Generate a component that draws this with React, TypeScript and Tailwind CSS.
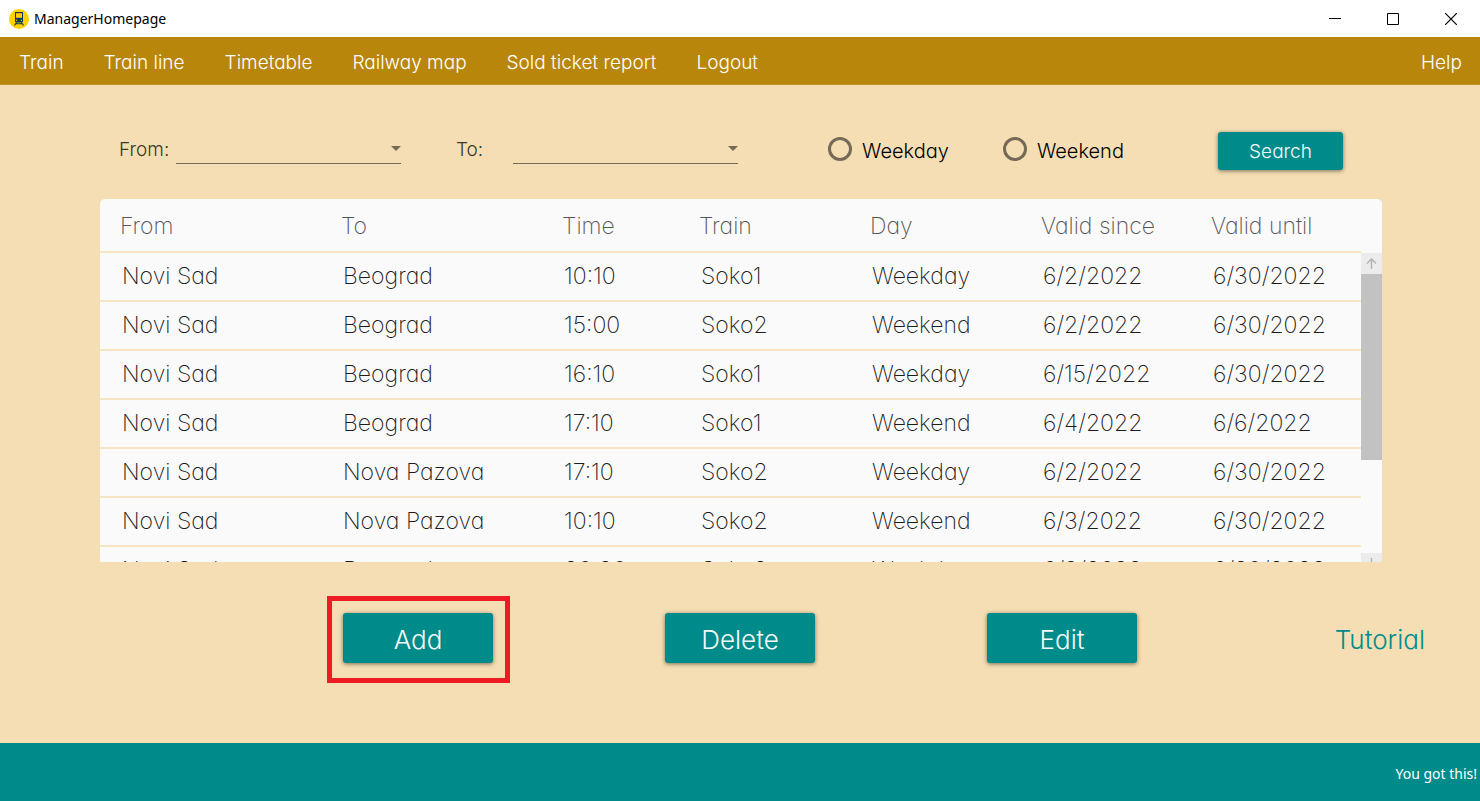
import React from "react";

const menuItems = ["Train", "Train line", "Timetable", "Railway map", "Sold ticket report", "Logout"];

const columns = [
  { label: "From", width: "w-[221px]" },
  { label: "To", width: "w-[221px]" },
  { label: "Time", width: "w-[137px]" },
  { label: "Train", width: "w-[171px]" },
  { label: "Day", width: "w-[171px]" },
  { label: "Valid since", width: "w-[170px]" },
  { label: "Valid until", width: "w-[170px]" },
];

const rows = [
  ["Novi Sad", "Beograd", "10:10", "Soko1", "Weekday", "6/2/2022", "6/30/2022"],
  ["Novi Sad", "Beograd", "15:00", "Soko2", "Weekend", "6/2/2022", "6/30/2022"],
  ["Novi Sad", "Beograd", "16:10", "Soko1", "Weekday", "6/15/2022", "6/30/2022"],
  ["Novi Sad", "Beograd", "17:10", "Soko1", "Weekend", "6/4/2022", "6/6/2022"],
  ["Novi Sad", "Nova Pazova", "17:10", "Soko2", "Weekday", "6/2/2022", "6/30/2022"],
  ["Novi Sad", "Nova Pazova", "10:10", "Soko2", "Weekend", "6/3/2022", "6/30/2022"],
  ["Novi Sad", "Beograd", "20:20", "Soko2", "Weekday", "6/2/2022", "6/30/2022"],
];

function TrainLogo() {
  return (
    <svg width="20" height="20" viewBox="0 0 20 20" aria-hidden="true">
      <circle cx="10" cy="10" r="10" fill="#ffd200" />
      <path d="M6 3h8v9.500l-1 1H7l-1-1z" fill="#0f3558" />
      <path d="M7 4.200h6v4.600H7z" fill="#ffd200" />
      <circle cx="7.700" cy="11.300" r=".7" fill="#ffd200" />
      <circle cx="12.300" cy="11.300" r=".7" fill="#ffd200" />
      <path d="M7.500 13.500 5.500 16.500M12.500 13.500l2 3M6.800 14.700h6.400" stroke="#0f3558" strokeWidth="1.100" />
    </svg>
  );
}

function TitleBar() {
  return (
    <header className="flex h-[37px] items-center justify-between bg-white pl-[9px]">
      <div className="flex items-center gap-[5px] font-['Noto_Sans','Open_Sans',sans-serif] text-sm font-normal text-black">
        <TrainLogo />
        <span>ManagerHomepage</span>
      </div>
      <div className="flex h-full text-black">
        <button aria-label="Minimize" className="flex w-[58px] items-center justify-center">
          <svg width="12" height="12" viewBox="0 0 12 12" shapeRendering="crispEdges">
            <path d="M0 5.5h12" stroke="currentColor" />
          </svg>
        </button>
        <button aria-label="Maximize" className="flex w-[58px] items-center justify-center">
          <svg width="12" height="12" viewBox="0 0 12 12" fill="none">
            <path d="M.5 .5h11v11H.5z" stroke="currentColor" />
          </svg>
        </button>
        <button aria-label="Close" className="flex w-[58px] items-center justify-center">
          <svg width="12" height="12" viewBox="0 0 12 12">
            <path d="M0 0l12 12M12 0L0 12" stroke="currentColor" strokeWidth="1.200" />
          </svg>
        </button>
      </div>
    </header>
  );
}

function StationSelect({ id, label }: { id: string; label: string }) {
  return (
    <div className="flex items-center">
      <label htmlFor={id} className="w-[57px] pt-1 text-[19px] text-[#3c372f]">
        {label}
      </label>
      <div className="relative">
        <select
          id={id}
          defaultValue=""
          className="block h-[31px] w-[225px] appearance-none border-b border-[#756a56] bg-transparent outline-none"
        >
          <option value=""></option>
          <option>Novi Sad</option>
          <option>Beograd</option>
          <option>Nova Pazova</option>
        </select>
        <svg className="pointer-events-none absolute right-0 top-[13px]" width="10" height="5" viewBox="0 0 10 5">
          <path d="M0 0h10L5 5z" fill="#756a56" />
        </svg>
      </div>
    </div>
  );
}

function DayRadio({ label }: { label: string }) {
  return (
    <label className="flex items-center gap-[10px] text-xl text-black">
      <input
        type="radio"
        name="day"
        className="mb-1 h-6 w-6 appearance-none rounded-full border-[3px] border-[#756a56] checked:bg-[#008b8b]"
      />
      {label}
    </label>
  );
}

function ActionButton({ label }: { label: string }) {
  return (
    <button className="h-[50px] w-[150px] rounded-[3px] bg-[#008b8b] pt-[3px] text-[26px] text-[#f4fafa] shadow-[0_1px_4px_rgba(0,0,0,0.5)]">
      {label}
    </button>
  );
}

function Scrollbar() {
  return (
    <div className="w-[21px] shrink-0 pt-[54px]" aria-hidden="true">
      <div className="flex h-[21px] items-center justify-center bg-[#ececec]">
        <svg width="11" height="11" viewBox="0 0 11 11" fill="none">
          <path d="M5.500 11V1.500M1 5.500l4.500-4.500L10 5.500" stroke="#b4b4b4" strokeWidth="1.500" />
        </svg>
      </div>
      <div className="h-[186px] bg-[#c2c2c2]" />
      <div className="h-[93px]" />
      <div className="flex h-[21px] items-center justify-center bg-[#ececec]">
        <svg width="11" height="11" viewBox="0 0 11 11" fill="none">
          <path d="M5.500 0v9.500M1 5.500 5.500 10 10 5.500" stroke="#b4b4b4" strokeWidth="1.500" />
        </svg>
      </div>
    </div>
  );
}

export default function App() {
  return (
    <div className="flex min-h-screen flex-col bg-[#f5deb3] font-['Inter','Lato',sans-serif] font-light [font-feature-settings:'cv11']">
      <TitleBar />

      <nav className="flex h-12 items-center justify-between border-b border-[#c3952a] bg-[#b8860b] pl-[19px] pr-[18px] pt-[6px] text-[19px] text-white">
        <div className="flex gap-10">
          {menuItems.map((item) => (
            <a key={item} href="#">
              {item}
            </a>
          ))}
        </div>
        <a href="#">Help</a>
      </nav>

      <main className="flex-1">
        <form className="ml-[119px] mr-[137px] mt-[47px] flex h-[38px] items-center justify-between">
          <div className="flex gap-[55px] pb-[6px]">
            <StationSelect id="from" label="From:" />
            <StationSelect id="to" label="To:" />
          </div>
          <div className="flex gap-[54px] pr-1">
            <DayRadio label="Weekday" />
            <DayRadio label="Weekend" />
          </div>
          <button
            type="button"
            className="h-[38px] w-[125px] rounded-[3px] bg-[#008b8b] pt-[3px] text-[19px] text-[#f4fafa] shadow-[0_1px_4px_rgba(0,0,0,0.5)]"
          >
            Search
          </button>
        </form>

        <div className="ml-[100px] mr-[98px] mt-[29px] flex h-[363px] overflow-hidden rounded-t-[5px] bg-[#fafafa]">
          <table className="h-fit flex-1 table-fixed border-separate border-spacing-0 text-left text-[23px] font-extralight">
            <thead>
              <tr className="h-[54px] text-[#555555]">
                {columns.map((column) => (
                  <th
                    key={column.label}
                    className={`${column.width} border-b-2 border-[#f7e4c2] pl-5 pt-[3px] font-extralight`}
                  >
                    {column.label}
                  </th>
                ))}
              </tr>
            </thead>
            <tbody>
              {rows.map((row, index) => (
                <tr key={index} className="h-[49px] text-[#1c1c1c]">
                  {row.map((value, cell) => (
                    <td key={cell} className="whitespace-nowrap border-b-2 border-[#f7e4c2] pl-[22px]">
                      {value}
                    </td>
                  ))}
                </tr>
              ))}
            </tbody>
          </table>
          <Scrollbar />
        </div>

        <div className="mt-[51px] grid grid-cols-[257fr_322fr_322fr_322fr_257fr] items-center">
          <div className="col-start-2 flex justify-center">
            <div className="relative">
              <ActionButton label="Add" />
              <div className="pointer-events-none absolute -bottom-5 -left-4 -right-[17px] -top-[17px] border-[5px] border-[#ed1c24]" />
            </div>
          </div>
          <div className="flex justify-center">
            <ActionButton label="Delete" />
          </div>
          <div className="flex justify-center">
            <ActionButton label="Edit" />
          </div>
          <div className="flex justify-end pr-[55px] pt-[3px]">
            <a href="#" className="text-[26px] text-[#008b8b]">
              Tutorial
            </a>
          </div>
        </div>
      </main>

      <footer className="flex h-[58px] items-center justify-end bg-[#008b8b] pr-[3px] pt-1 font-['Noto_Sans','Open_Sans',sans-serif] text-sm font-normal text-white">
        You got this!
      </footer>
    </div>
  );
}
